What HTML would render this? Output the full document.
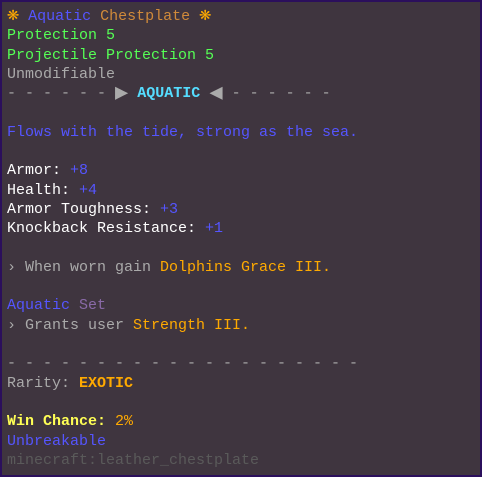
<!DOCTYPE html>
<html><head><meta charset="utf-8"><style>
html,body{margin:0;padding:0;background:#3f353f;}
.box{position:absolute;left:0;top:0;width:478px;height:473px;border:2px solid #2b0f5c;background:#3f353f;}
.t{position:absolute;left:7px;top:7px;font-family:"Liberation Mono","DejaVu Sans Mono",monospace;font-size:15px;line-height:19.3px;white-space:pre;color:#aaa;}
.g{color:#55ff55}.w{color:#fff}.b{color:#5555ff}.o{color:#ffaa00}.y{color:#ffff55;font-weight:bold}.d{color:#5a5a5a}.c{color:#55ddff;font-weight:bold}
.tri{color:#aaa;font-size:22px;line-height:10px;vertical-align:-2px}
.fl{color:#ffaa00;font-size:20px;line-height:10px}
</style></head><body><div class="box"></div>
<div class="t"><span class="fl">❋</span> <span class="b">Aquatic</span> <span style="color:#d08a3a">Chestplate</span> <span class="fl">❋</span>
<span class="g">Protection 5</span>
<span class="g">Projectile Protection 5</span>
Unmodifiable
- - - - - - <span class="tri">▶</span> <span class="c">AQUATIC</span> <span class="tri">◀</span> - - - - - -

<span class="b">Flows with the tide, strong as the sea.</span>

<span class="w">Armor: </span><span class="b">+8</span>
<span class="w">Health: </span><span class="b">+4</span>
<span class="w">Armor Toughness: </span><span class="b">+3</span>
<span class="w">Knockback Resistance: </span><span class="b">+1</span>

› When worn gain <span class="o">Dolphins Grace III.</span>

<span class="b">Aquatic</span> <span style="color:#8a6aa8">Set</span>
› Grants user <span class="o">Strength III.</span>

- - - - - - - - - - - - - - - - - - - -
Rarity: <span class="o" style="font-weight:bold">EXOTIC</span>

<span class="y">Win Chance:</span> <span class="o">2%</span>
<span class="b">Unbreakable</span>
<span class="d">minecraft:leather_chestplate</span></div>
</body></html>
